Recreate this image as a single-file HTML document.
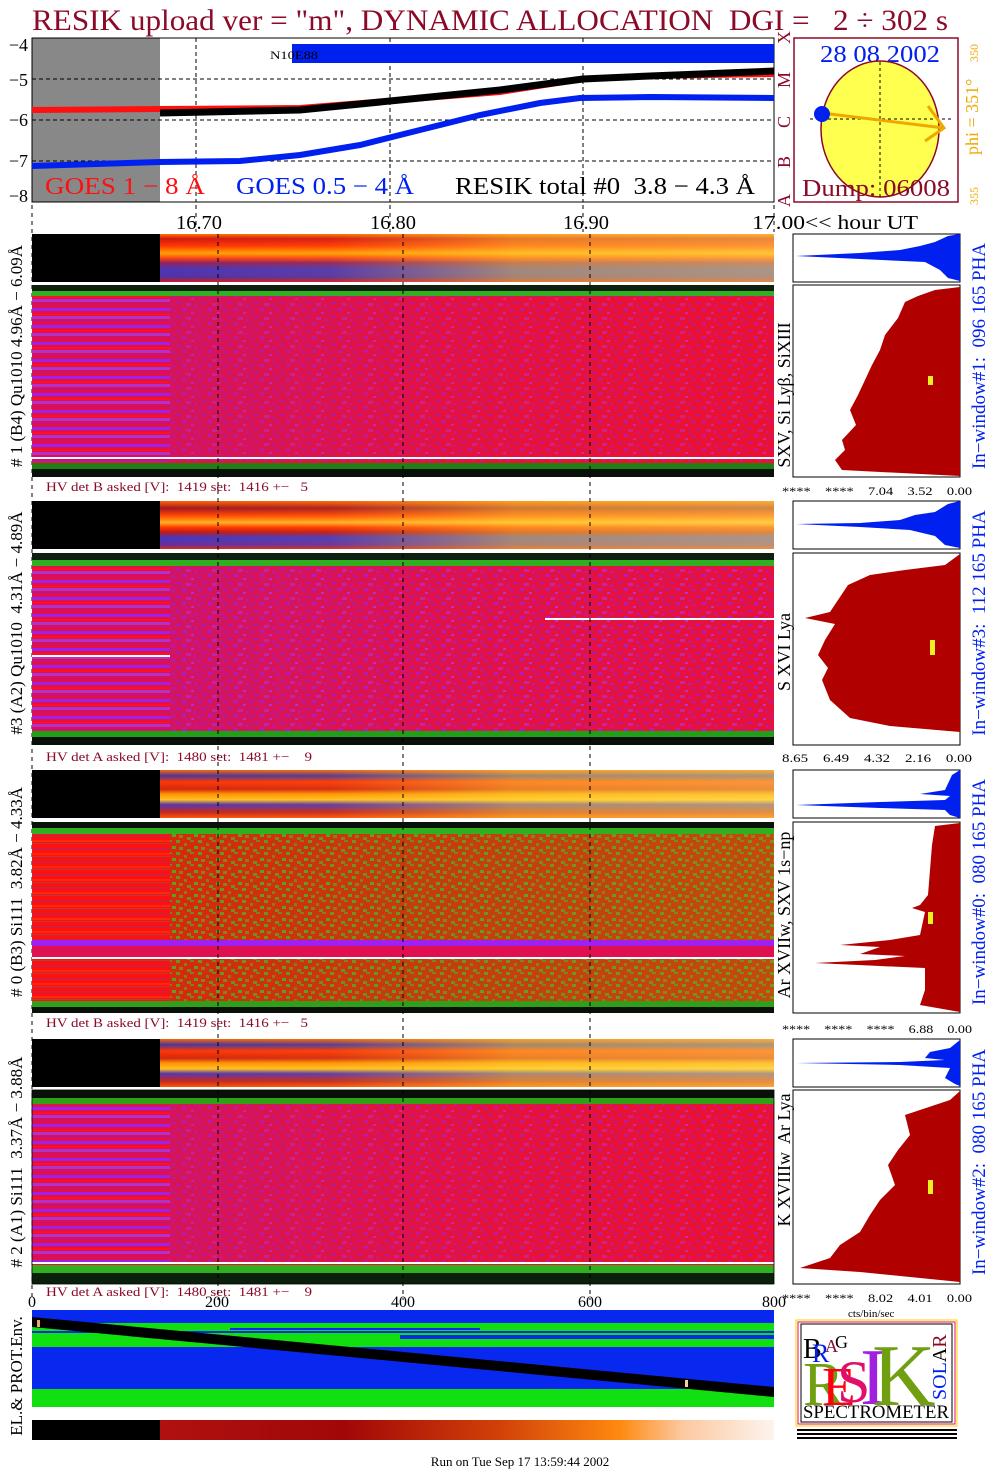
<!DOCTYPE html>
<html><head><meta charset="utf-8"><style>
html,body{margin:0;padding:0;background:#fff;}
svg{display:block;}
text{font-family:"Liberation Serif",serif;white-space:pre;}
</style></head><body>
<svg width="1004" height="1476" viewBox="0 0 1004 1476" xmlns="http://www.w3.org/2000/svg" xml:space="preserve">
<defs>
<pattern id="pp" width="26" height="14" patternUnits="userSpaceOnUse">
<rect x="0" y="0" width="4" height="3" fill="#a020f0"/><rect x="9" y="4" width="3" height="2" fill="#b040ff"/><rect x="15" y="1" width="5" height="3" fill="#c01890"/><rect x="20" y="8" width="4" height="2" fill="#9020e0"/><rect x="4" y="9" width="5" height="3" fill="#c030c0"/><rect x="12" y="11" width="3" height="2" fill="#a020f0"/>
</pattern>
<pattern id="gg" width="22" height="12" patternUnits="userSpaceOnUse">
<rect x="0" y="0" width="4" height="3" fill="#40c020"/><rect x="8" y="3" width="3" height="3" fill="#809010"/><rect x="14" y="0" width="4" height="2" fill="#60a018"/><rect x="18" y="6" width="4" height="3" fill="#30d020"/><rect x="3" y="7" width="4" height="3" fill="#7a9a10"/><rect x="11" y="9" width="4" height="3" fill="#50b020"/>
</pattern>
<pattern id="sl" width="140" height="17" patternUnits="userSpaceOnUse">
<rect width="140" height="17" fill="#e01048"/><rect y="2" width="140" height="3" fill="#a020e8"/><rect y="7" width="140" height="2" fill="#ff1020"/><rect y="10" width="140" height="3" fill="#b030d0"/><rect y="14" width="140" height="2" fill="#d01070"/>
</pattern>
<pattern id="slr" width="140" height="13" patternUnits="userSpaceOnUse">
<rect width="140" height="13" fill="#ff1010"/><rect y="3" width="140" height="2" fill="#d02040"/><rect y="8" width="140" height="2" fill="#ff2808"/><rect y="11" width="140" height="1" fill="#b04040"/>
</pattern>
<linearGradient id="s1" x1="0" x2="0" y1="0" y2="1"><stop offset="0" stop-color="#ff7000"/><stop offset="0.1" stop-color="#d01010"/><stop offset="0.25" stop-color="#ff3000"/><stop offset="0.4" stop-color="#ffa000"/><stop offset="0.5" stop-color="#ff4010"/><stop offset="0.6" stop-color="#8a1a60"/><stop offset="0.75" stop-color="#4030c0"/><stop offset="0.9" stop-color="#5028a0"/><stop offset="1" stop-color="#d01020"/></linearGradient>
<linearGradient id="s2" x1="0" x2="0" y1="0" y2="1"><stop offset="0" stop-color="#ff6000"/><stop offset="0.15" stop-color="#a01020"/><stop offset="0.3" stop-color="#ff4000"/><stop offset="0.45" stop-color="#ffb020"/><stop offset="0.55" stop-color="#ff3000"/><stop offset="0.65" stop-color="#c01010"/><stop offset="0.75" stop-color="#4030c0"/><stop offset="0.92" stop-color="#6028a0"/><stop offset="1" stop-color="#e02010"/></linearGradient>
<linearGradient id="s3" x1="0" x2="0" y1="0" y2="1"><stop offset="0" stop-color="#ff6000"/><stop offset="0.12" stop-color="#4030a0"/><stop offset="0.25" stop-color="#ff3000"/><stop offset="0.4" stop-color="#d02010"/><stop offset="0.5" stop-color="#ff9000"/><stop offset="0.62" stop-color="#ffc020"/><stop offset="0.72" stop-color="#5030b0"/><stop offset="0.88" stop-color="#c02020"/><stop offset="1" stop-color="#ff5000"/></linearGradient>
<linearGradient id="yl" x1="0" x2="1" y1="0" y2="0"><stop offset="0" stop-color="#ffd040" stop-opacity="0"/><stop offset="0.4" stop-color="#ffd040" stop-opacity="0.1"/><stop offset="0.65" stop-color="#ffe040" stop-opacity="0.5"/><stop offset="1" stop-color="#ffe860" stop-opacity="0.55"/></linearGradient>
<linearGradient id="pf" x1="0" x2="1" y1="0" y2="0"><stop offset="0" stop-color="#9020e0" stop-opacity="0.35"/><stop offset="0.6" stop-color="#9020e0" stop-opacity="0.12"/><stop offset="1" stop-color="#9020e0" stop-opacity="0.05"/></linearGradient>
<linearGradient id="gf" x1="0" x2="1" y1="0" y2="0"><stop offset="0" stop-color="#50a010" stop-opacity="0.1"/><stop offset="0.5" stop-color="#60a010" stop-opacity="0.3"/><stop offset="1" stop-color="#80a010" stop-opacity="0.4"/></linearGradient>
<linearGradient id="cb" x1="0" x2="1" y1="0" y2="0"><stop offset="0" stop-color="#b01010"/><stop offset="0.3" stop-color="#a00808"/><stop offset="0.55" stop-color="#d04008"/><stop offset="0.75" stop-color="#ff8a10"/><stop offset="0.85" stop-color="#fcc8a0"/><stop offset="1" stop-color="#fdf4ee"/></linearGradient>
</defs>

<text x="32" y="30" font-size="30" fill="#8b0a28" textLength="916" lengthAdjust="spacingAndGlyphs">RESIK upload ver = "m", DYNAMIC ALLOCATION  DGI =   2 ÷ 302 s</text>

<rect x="32" y="38" width="128" height="164" fill="#888"/>
<rect x="32" y="38" width="742" height="164" fill="none" stroke="#000" stroke-width="1"/>
<g stroke="#000" stroke-dasharray="4,3" stroke-width="1">
<line x1="32" y1="79" x2="774" y2="79"/><line x1="32" y1="120" x2="774" y2="120"/><line x1="32" y1="161" x2="774" y2="161"/>
<line x1="196" y1="38" x2="196" y2="202"/><line x1="390" y1="38" x2="390" y2="202"/><line x1="583" y1="38" x2="583" y2="202"/>
</g>
<rect x="292" y="44" width="482" height="19" fill="#0020f0"/>
<text x="270" y="59" font-size="12" fill="#000" textLength="48" lengthAdjust="spacingAndGlyphs">N10E88</text>
<path d="M32 110 L160 109 L300 108 L400 100 L500 92 L583 79 L650 76 L774 74" stroke="#ff1010" stroke-width="6" fill="none"/>
<path d="M160 113 L300 110 L400 100 L500 90 L583 79 L650 76 L774 71" stroke="#000" stroke-width="7" fill="none"/>
<path d="M32 166 L160 162 L240 161 L300 155 L360 145 L420 130 L480 115 L540 103 L580 98 L650 97 L774 98" stroke="#0020f0" stroke-width="6" fill="none"/>
<g font-size="18" text-anchor="end" fill="#000"><text x="28" y="51">−4</text><text x="28" y="86">−5</text><text x="28" y="126">−6</text><text x="28" y="167">−7</text><text x="28" y="202">−8</text></g>
<text x="45" y="194" font-size="24" fill="#ff1010" textLength="160" lengthAdjust="spacingAndGlyphs">GOES 1 − 8 Å</text>
<text x="236" y="194" font-size="24" fill="#0020f0" textLength="178" lengthAdjust="spacingAndGlyphs">GOES 0.5 − 4 Å</text>
<text x="455" y="194" font-size="24" fill="#000" textLength="300" lengthAdjust="spacingAndGlyphs">RESIK total #0  3.8 − 4.3 Å</text>
<g font-size="18" fill="#8b0a28"><text transform="translate(790,44) rotate(-90)">X</text><text transform="translate(790,88) rotate(-90)">M</text><text transform="translate(790,128) rotate(-90)">C</text><text transform="translate(790,168) rotate(-90)">B</text><text transform="translate(790,207) rotate(-90)">A</text></g>

<rect x="794" y="38" width="164" height="164" fill="#fff" stroke="#8b0a28" stroke-width="1.5"/>
<text x="880" y="62" font-size="24" fill="#0020f0" text-anchor="middle" textLength="120" lengthAdjust="spacingAndGlyphs">28 08 2002</text>
<ellipse cx="880" cy="129" rx="59" ry="68" fill="#ffff50" stroke="#8b0a28" stroke-width="1.5"/>
<line x1="880" y1="62" x2="880" y2="197" stroke="#000" stroke-dasharray="3,3"/>
<line x1="810" y1="119" x2="952" y2="119" stroke="#000" stroke-dasharray="3,3"/>
<g stroke="#f0a800" stroke-width="3" fill="none"><line x1="822" y1="113" x2="944" y2="128"/><path d="M928 106 L944 128 L925 141"/></g>
<circle cx="822" cy="114" r="8" fill="#0020f0"/>
<text x="876" y="196" font-size="24" fill="#8b0a28" text-anchor="middle" textLength="148" lengthAdjust="spacingAndGlyphs">Dump: 06008</text>
<text transform="translate(978,155) rotate(-90)" font-size="18" fill="#f0a800">phi = 351°</text>
<text transform="translate(978,62) rotate(-90)" font-size="12" fill="#f0a800">350</text>
<text transform="translate(978,205) rotate(-90)" font-size="12" fill="#f0a800">355</text>

<line x1="32" y1="205" x2="32" y2="1300" stroke="#000" stroke-dasharray="4,4"/>
<g stroke="#000" stroke-dasharray="4,4"><line x1="196" y1="205" x2="196" y2="232"/><line x1="390" y1="205" x2="390" y2="232"/><line x1="583" y1="205" x2="583" y2="232"/><line x1="774" y1="205" x2="774" y2="232"/></g>
<g font-size="20" fill="#000"><text x="176" y="229" textLength="46" lengthAdjust="spacingAndGlyphs">16.70</text><text x="370" y="229" textLength="46" lengthAdjust="spacingAndGlyphs">16.80</text><text x="563" y="229" textLength="46" lengthAdjust="spacingAndGlyphs">16.90</text><text x="752" y="229" textLength="166" lengthAdjust="spacingAndGlyphs">17.00&lt;&lt; hour UT</text></g>

<!-- PANEL 1 -->
<rect x="32" y="234" width="742" height="48" fill="url(#s1)"/>
<rect x="32" y="234" width="742" height="48" fill="url(#yl)"/>
<rect x="32" y="234" width="128" height="48" fill="#000"/>
<rect x="32" y="285" width="742" height="192" fill="#f01028"/>
<rect x="170" y="296" width="604" height="166" fill="url(#pp)" opacity="0.55"/>
<rect x="32" y="296" width="742" height="166" fill="url(#pf)"/>
<rect x="32" y="296" width="138" height="166" fill="url(#sl)"/>
<rect x="32" y="285" width="742" height="6" fill="#102010"/><rect x="32" y="291" width="742" height="5" fill="#30b020"/>
<rect x="32" y="457" width="742" height="2" fill="#fff"/>
<rect x="32" y="463" width="742" height="6" fill="#208018"/><rect x="32" y="469" width="742" height="8" fill="#081008"/>
<text x="46" y="491" font-size="13" fill="#8b0a28" textLength="262" lengthAdjust="spacingAndGlyphs">HV det B asked [V]:  1419 set:  1416 +−   5</text>
<rect x="793" y="234" width="167" height="48" fill="#fff" stroke="#000"/>
<polygon points="960,234 948,236 935,242 920,246 900,250 860,253 796,256 860,259 925,262 940,270 948,278 960,281" fill="#0020f0"/>
<rect x="793" y="285" width="167" height="192" fill="#fff" stroke="#000"/>
<polygon points="960,287 935,290 918,296 905,302 898,318 885,335 880,350 872,365 865,380 858,395 850,410 856,425 842,440 845,450 835,460 842,470 960,476" fill="#b00000"/>
<rect x="928" y="376" width="5" height="9" fill="#f0f020"/>
<text x="782" y="495" font-size="12" fill="#000" textLength="190" lengthAdjust="spacingAndGlyphs">****    ****    7.04    3.52    0.00</text>

<!-- PANEL 2 -->
<rect x="32" y="501" width="742" height="48" fill="url(#s2)"/>
<rect x="32" y="501" width="742" height="48" fill="url(#yl)"/>
<rect x="32" y="501" width="128" height="48" fill="#000"/>
<rect x="32" y="553" width="742" height="192" fill="#ec1034"/>
<rect x="170" y="566" width="604" height="165" fill="url(#pp)" opacity="0.7"/>
<rect x="32" y="566" width="742" height="165" fill="url(#pf)"/>
<rect x="32" y="566" width="138" height="165" fill="url(#sl)"/>
<rect x="32" y="553" width="742" height="7" fill="#102010"/><rect x="32" y="560" width="742" height="6" fill="#30b020"/>
<rect x="545" y="618" width="229" height="2" fill="#fff"/><rect x="32" y="655" width="138" height="2" fill="#fff"/>
<rect x="32" y="731" width="742" height="6" fill="#20a018"/><rect x="32" y="737" width="742" height="8" fill="#081008"/>
<text x="46" y="761" font-size="13" fill="#8b0a28" textLength="266" lengthAdjust="spacingAndGlyphs">HV det A asked [V]:  1480 set:  1481 +−    9</text>
<rect x="793" y="501" width="167" height="48" fill="#fff" stroke="#000"/>
<polygon points="960,501 948,504 935,512 915,515 900,520 860,523 796,524 860,527 910,530 935,536 945,545 960,548" fill="#0020f0"/>
<rect x="793" y="553" width="167" height="192" fill="#fff" stroke="#000"/>
<polygon points="960,554 945,565 905,570 870,575 848,585 838,600 830,612 805,618 835,624 825,640 818,655 828,668 822,680 830,700 850,718 890,726 960,732" fill="#b00000"/>
<rect x="930" y="640" width="5" height="15" fill="#f0f020"/>
<text x="782" y="762" font-size="12" fill="#000" textLength="190" lengthAdjust="spacingAndGlyphs">8.65    6.49    4.32    2.16    0.00</text>

<!-- PANEL 3 -->
<rect x="32" y="770" width="742" height="48" fill="url(#s3)"/>
<rect x="32" y="770" width="742" height="48" fill="url(#yl)"/>
<rect x="32" y="770" width="128" height="48" fill="#000"/>
<rect x="32" y="822" width="742" height="191" fill="#f01010"/>
<rect x="170" y="834" width="604" height="168" fill="url(#gg)" opacity="0.75"/>
<rect x="32" y="834" width="742" height="168" fill="url(#gf)"/>
<rect x="32" y="834" width="138" height="168" fill="url(#slr)"/>
<rect x="32" y="822" width="742" height="6" fill="#081008"/><rect x="32" y="828" width="742" height="6" fill="#30b020"/>
<rect x="32" y="940" width="742" height="6" fill="#a020f0"/><rect x="32" y="946" width="742" height="12" fill="#e01050"/><rect x="32" y="957" width="742" height="2" fill="#fff"/>
<rect x="32" y="1001" width="742" height="6" fill="#30a018"/><rect x="32" y="1007" width="742" height="6" fill="#081008"/>
<text x="46" y="1027" font-size="13" fill="#8b0a28" textLength="262" lengthAdjust="spacingAndGlyphs">HV det B asked [V]:  1419 set:  1416 +−   5</text>
<rect x="793" y="770" width="167" height="48" fill="#fff" stroke="#000"/>
<polygon points="960,770 952,775 945,790 920,794 950,796 945,800 880,802 796,805 880,808 945,810 950,815 960,818" fill="#0020f0"/>
<rect x="793" y="822" width="167" height="191" fill="#fff" stroke="#000"/>
<polygon points="960,823 935,826 932,845 930,870 928,895 920,905 912,908 925,912 920,935 890,940 840,945 880,947 860,954 905,956 875,960 815,963 880,966 925,968 925,990 920,1005 960,1012" fill="#b00000"/>
<rect x="928" y="912" width="5" height="12" fill="#f0f020"/>
<text x="782" y="1033" font-size="12" fill="#000" textLength="190" lengthAdjust="spacingAndGlyphs">****    ****    ****    6.88    0.00</text>

<!-- PANEL 4 -->
<rect x="32" y="1039" width="742" height="48" fill="url(#s3)"/>
<rect x="32" y="1039" width="742" height="48" fill="url(#yl)"/>
<rect x="32" y="1039" width="128" height="48" fill="#000"/>
<rect x="32" y="1090" width="742" height="194" fill="#f01028"/>
<rect x="170" y="1104" width="604" height="160" fill="url(#pp)" opacity="0.55"/>
<rect x="32" y="1104" width="742" height="160" fill="url(#pf)"/>
<rect x="32" y="1104" width="138" height="160" fill="url(#sl)"/>
<rect x="32" y="1090" width="742" height="8" fill="#081008"/><rect x="32" y="1098" width="742" height="6" fill="#30a018"/>
<rect x="32" y="1262" width="742" height="2" fill="#fff"/>
<rect x="32" y="1265" width="742" height="8" fill="#30b020"/><rect x="32" y="1273" width="742" height="11" fill="#0a200a"/>
<rect x="32" y="1090" width="742" height="194" fill="none" stroke="#000" stroke-width="0.8"/>
<text x="46" y="1296" font-size="13" fill="#8b0a28" textLength="266" lengthAdjust="spacingAndGlyphs">HV det A asked [V]:  1480 set:  1481 +−    9</text>
<rect x="793" y="1039" width="167" height="48" fill="#fff" stroke="#000"/>
<polygon points="960,1040 950,1048 930,1052 925,1058 945,1060 900,1062 796,1063 900,1065 950,1068 945,1078 955,1084 960,1086" fill="#0020f0"/>
<rect x="793" y="1090" width="167" height="194" fill="#fff" stroke="#000"/>
<polygon points="960,1091 950,1100 920,1110 905,1115 910,1135 898,1150 888,1165 895,1185 880,1200 870,1215 860,1232 840,1245 830,1258 800,1268 860,1272 960,1282" fill="#b00000"/>
<rect x="928" y="1180" width="5" height="14" fill="#f0f020"/>
<text x="782" y="1302" font-size="12" fill="#000" textLength="190" lengthAdjust="spacingAndGlyphs">****    ****    8.02    4.01    0.00</text>
<text x="848" y="1317" font-size="11" fill="#000">cts/bin/sec</text>

<g stroke="#000" stroke-dasharray="4,4" stroke-width="1"><line x1="218" y1="234" x2="218" y2="1300"/><line x1="403" y1="234" x2="403" y2="1300"/><line x1="590" y1="234" x2="590" y2="1300"/></g>

<g font-size="16" fill="#000"><text x="28" y="1307">0</text><text x="205" y="1307">200</text><text x="391" y="1307">400</text><text x="578" y="1307">600</text><text x="762" y="1307">800</text></g>

<g font-size="17" fill="#000" text-anchor="middle">
<text transform="translate(22,356) rotate(-90)"># 1 (B4) Qu1010 4.96Å − 6.09Å</text>
<text transform="translate(22,623) rotate(-90)">#3 (A2) Qu1010  4.31Å − 4.89Å</text>
<text transform="translate(22,892) rotate(-90)"># 0 (B3) Si111  3.82Å − 4.33Å</text>
<text transform="translate(22,1162) rotate(-90)"># 2 (A1) Si111  3.37Å − 3.88Å</text>
<text transform="translate(22,1376) rotate(-90)">EL.&amp; PROT.Env.</text>
</g>
<g font-size="18" fill="#000" text-anchor="middle">
<text transform="translate(790,395) rotate(-90)">SXV, Si Lyβ, SiXIII</text>
<text transform="translate(790,652) rotate(-90)">S XVI Lya</text>
<text transform="translate(790,915) rotate(-90)">Ar XVIIw, SXV 1s−np</text>
<text transform="translate(790,1160) rotate(-90)">K XVIIIw  Ar Lya</text>
</g>
<g font-size="19" fill="#0020f0" text-anchor="middle">
<text transform="translate(985,356) rotate(-90)">In−window#1:  096 165 PHA</text>
<text transform="translate(985,623) rotate(-90)">In−window#3:  112 165 PHA</text>
<text transform="translate(985,892) rotate(-90)">In−window#0:  080 165 PHA</text>
<text transform="translate(985,1162) rotate(-90)">In−window#2:  080 165 PHA</text>
</g>

<rect x="32" y="1310" width="742" height="97" fill="#0828f0"/>
<rect x="32" y="1323" width="742" height="24" fill="#10e010"/>
<rect x="32" y="1331" width="742" height="2" fill="#0828f0"/><rect x="230" y="1328" width="250" height="2" fill="#0828f0"/>
<rect x="400" y="1335" width="374" height="4" fill="#0828f0"/>
<rect x="32" y="1389" width="742" height="18" fill="#10e010"/>
<polygon points="32,1317 32,1327 774,1397 774,1387" fill="#000"/>
<rect x="37" y="1320" width="3" height="7" fill="#f0a860"/><rect x="685" y="1380" width="3" height="7" fill="#f8d0a0"/>

<rect x="160" y="1420" width="614" height="20" fill="url(#cb)"/>
<rect x="32" y="1420" width="128" height="20" fill="#000"/>

<text x="520" y="1466" font-size="13" fill="#000" text-anchor="middle">Run on Tue Sep 17 13:59:44 2002</text>

<!-- Logo -->
<rect x="796" y="1320" width="161" height="106" fill="#fff" stroke="#ffd000" stroke-width="1"/>
<rect x="798" y="1322" width="157" height="102" fill="none" stroke="#e01060" stroke-width="1"/>
<rect x="801" y="1324" width="151" height="98" fill="none" stroke="#000" stroke-width="1"/>
<text x="803" y="1418" font-size="19" fill="#000" textLength="146" lengthAdjust="spacingAndGlyphs">SPECTROMETER</text>
<text x="803" y="1405" font-size="62" fill="#70a010">R</text>
<text x="822" y="1405" font-size="55" fill="#ff0010">E</text>
<text x="837" y="1402" font-size="60" fill="#e0106a">S</text>
<text x="860" y="1404" font-size="80" fill="#a020e0">I</text>
<text x="872" y="1405" font-size="88" fill="#70a010">K</text>
<text x="803" y="1358" font-size="28" fill="#000">B</text>
<text x="812" y="1362" font-size="26" fill="#0020f0">R</text>
<text x="825" y="1352" font-size="18" fill="#8b0a28">A</text>
<text x="835" y="1348" font-size="18" fill="#000">G</text>
<text transform="translate(946,1400) rotate(-90)" font-size="20"><tspan fill="#0020f0">SOL</tspan><tspan fill="#000">A</tspan><tspan fill="#8b0a28">R</tspan></text>
<g fill="#000"><rect x="797" y="1429" width="160" height="2"/><rect x="797" y="1433" width="160" height="2"/><rect x="797" y="1437" width="160" height="2"/></g>
</svg>
</body></html>
